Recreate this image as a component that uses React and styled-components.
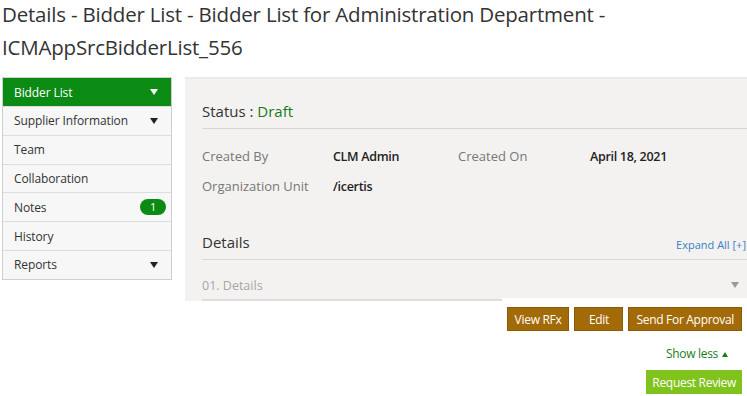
import React from "react";
import styled, { createGlobalStyle } from "styled-components";

const GlobalStyle = createGlobalStyle`
  body {
    margin: 0;
    background: #fff;
    font-family: "Open Sans", "Noto Sans", sans-serif;
    color: #333;
  }
`;

const menu = [
  { name: "Bidder List", arrow: true, active: true },
  { name: "Supplier Information", arrow: true },
  { name: "Team" },
  { name: "Collaboration" },
  { name: "Notes", badge: 1 },
  { name: "History" },
  { name: "Reports", arrow: true },
];

function App() {
  return (
    <>
      <GlobalStyle />
      <Page>
        <Title>
          Details - Bidder List - Bidder List for Administration Department -
          <TitleLine>ICMAppSrcBidderList_556</TitleLine>
        </Title>
        <Body>
          <Sidebar>
            {menu.map((item) => (
              <MenuItem key={item.name} active={item.active}>
                <span>{item.name}</span>
                {item.arrow && <Caret active={item.active} />}
                {item.badge && <Badge>{item.badge}</Badge>}
              </MenuItem>
            ))}
          </Sidebar>
          <MainColumn>
            <Panel>
              <StatusRow>
                Status : <StatusValue>Draft</StatusValue>
              </StatusRow>
              <Fields>
                <Label>Created By</Label>
                <Value>CLM Admin</Value>
                <Label>Created On</Label>
                <Value>April 18, 2021</Value>
                <Label>Organization Unit</Label>
                <Value>/icertis</Value>
              </Fields>
              <SectionHead>
                <span>Details</span>
                <ExpandLink>Expand All [+]</ExpandLink>
              </SectionHead>
              <Accordion>
                <span>01. Details</span>
                <Caret muted />
              </Accordion>
            </Panel>
            <Actions>
              <ActionButton>View RFx</ActionButton>
              <ActionButton>Edit</ActionButton>
              <ActionButton>Send For Approval</ActionButton>
            </Actions>
            <ShowLess>
              Show less <UpCaret />
            </ShowLess>
            <ReviewButton>Request Review</ReviewButton>
          </MainColumn>
        </Body>
      </Page>
    </>
  );
}

const Page = styled.div`
  padding: 0 0 0 2px;
`;

const Title = styled.h1`
  margin: 0;
  font-size: 20.5px;
  font-weight: 400;
  line-height: 28px;
  color: #333;
  letter-spacing: -0.2px;
`;

const TitleLine = styled.span`
  display: block;
  margin-top: 5px;
`;

const Body = styled.div`
  display: flex;
  margin-top: 16px;
`;

const Sidebar = styled.div`
  width: 168px;
  border: 1px solid #cfcfcf;
  background: #f7f7f7;
  align-self: flex-start;
`;

const MenuItem = styled.div`
  display: flex;
  align-items: center;
  justify-content: space-between;
  height: 27.8px;
  padding: 0 5px 0 11px;
  font-size: 12px;
  letter-spacing: -0.1px;
  color: ${(p) => (p.active ? "#fff" : "#333")};
  background: ${(p) => (p.active ? "#0b8a14" : "transparent")};
  border-top: ${(p) => (p.active ? "none" : "1px solid #dedede")};
  &:first-child {
    height: 28px;
  }
`;

const Caret = styled.i`
  width: 0;
  height: 0;
  margin-right: 8px;
  border-left: 4px solid transparent;
  border-right: 4px solid transparent;
  border-top: 6px solid
    ${(p) => (p.active ? "#fff" : p.muted ? "#999" : "#222")};
`;

const Badge = styled.span`
  min-width: 26px;
  height: 16px;
  line-height: 16px;
  border-radius: 8px;
  background: #0b8a14;
  color: #fff;
  font-size: 11px;
  text-align: center;
`;

const MainColumn = styled.div`
  flex: 1;
  display: flex;
  flex-direction: column;
  align-items: flex-end;
  margin-left: 13px;
`;

const Panel = styled.div`
  align-self: stretch;
  background: #f3f2f1;
  border-top: 2px solid #eaeaea;
  padding: 20px 0 0 17px;
`;

const StatusRow = styled.div`
  font-size: 15px;
  line-height: 24px;
  padding-bottom: 5px;
  border-bottom: 1px solid #d6d6d6;
`;

const StatusValue = styled.span`
  color: #177a1c;
`;

const Fields = styled.div`
  display: grid;
  grid-template-columns: 131px 125px 132px 1fr;
  grid-auto-rows: 30px;
  align-items: center;
  margin-top: 12px;
  font-size: 13px;
`;

const Label = styled.span`
  color: #777;
`;

const Value = styled.span`
  font-weight: 600;
  font-size: 12.5px;
  letter-spacing: -0.3px;
  color: #222;
`;

const SectionHead = styled.div`
  display: flex;
  justify-content: space-between;
  align-items: flex-end;
  margin-top: 29px;
  padding-bottom: 5px;
  border-bottom: 1px solid #d9d9d9;
  font-size: 15px;
  line-height: 24px;
`;

const ExpandLink = styled.span`
  font-size: 11px;
  line-height: 18px;
  color: #3a7fc2;
  padding-right: 1px;
`;

const Accordion = styled.div`
  display: flex;
  justify-content: space-between;
  align-items: center;
  height: 28px;
  padding-top: 11px;
  font-size: 12.5px;
  color: #a6a6a6;
  border-bottom: 2px solid #dedede;
  i {
    margin-right: 8px;
  }
`;

const Actions = styled.div`
  display: flex;
  gap: 5px;
  background: #fff;
  margin-top: -3px;
  padding: 9px 5px 0 5px;
`;

const ActionButton = styled.button`
  min-width: 49px;
  height: 24px;
  padding: 0 7px;
  border: 1px solid #8a5a06;
  background: #a36a08;
  color: #fff;
  font-family: inherit;
  font-size: 12px;
  letter-spacing: -0.3px;
`;

const ShowLess = styled.div`
  display: flex;
  align-items: center;
  gap: 4px;
  margin: 14px 19px 0 0;
  font-size: 12px;
  line-height: 18px;
  letter-spacing: -0.3px;
  color: #1a7d1a;
`;

const UpCaret = styled.i`
  width: 0;
  height: 0;
  border-left: 3px solid transparent;
  border-right: 3px solid transparent;
  border-bottom: 5px solid #1a7d1a;
`;

const ReviewButton = styled.button`
  margin: 7px 5px 0 0;
  height: 24px;
  padding: 0 6px;
  border: none;
  background: #7fc31c;
  color: #fff;
  font-family: inherit;
  font-size: 12px;
  letter-spacing: -0.3px;
`;

export default App;
